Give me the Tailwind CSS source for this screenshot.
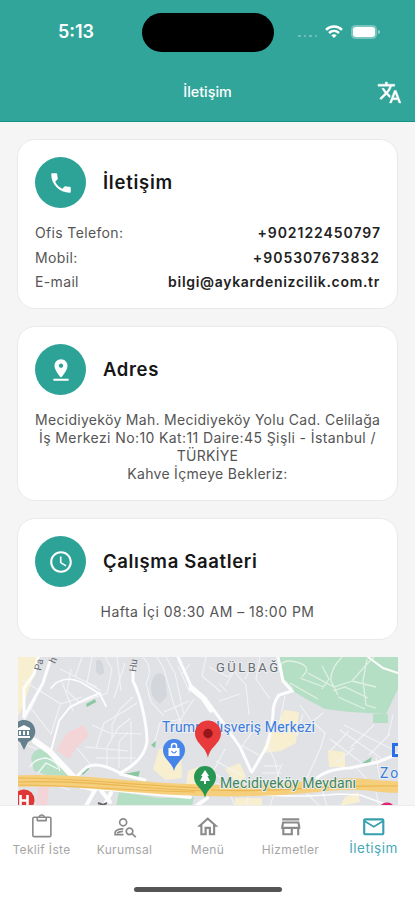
<!DOCTYPE html>
<html lang="tr">
<head>
<meta charset="utf-8">
<meta name="viewport" content="width=device-width, initial-scale=1">
<title>İletişim</title>
<script src="https://cdn.jsdelivr.net/npm/@tailwindcss/browser@4"></script>
</head>
<body class="h-[900px] w-[415px] overflow-hidden bg-[#f5f5f5] font-['Inter','Liberation_Sans',sans-serif] text-[#555]">
<div class="flex h-[900px] w-[415px] flex-col">
  <header class="h-[122px] shrink-0 border-b border-[#0f9489] bg-[#32a59b] text-white">
    <div class="grid h-[64px] grid-cols-[142px_132px_141px] items-center">
      <div class="pl-[10px] text-center text-[18px] font-semibold leading-[64px]">5:13</div>
      <div class="h-[39px] rounded-full bg-black"></div>
      <div class="flex items-center pl-[24px]">
        <div class="mt-[8px] flex gap-[3px]">
          <i class="size-[2.6px] rounded-full bg-white/35"></i><i class="size-[2.6px] rounded-full bg-white/35"></i><i class="size-[2.6px] rounded-full bg-white/35"></i><i class="size-[2.6px] rounded-full bg-white/35"></i>
        </div>
        <svg class="ml-[8px] h-[14px] w-[18px] shrink-0" viewBox="0 0 18 14" fill="none" stroke="#fff" stroke-width="2.500"><path d="M1 4.900C5.500.5 12.500.5 17 4.900M4 8C7 5.300 11 5.300 14 8"/><path d="M6.300 10.300Q9 8 11.700 10.300L9 13Z" fill="#fff" stroke="none"/></svg>
        <div class="ml-[8px] h-[14px] w-[26px] shrink-0 rounded-[4.500px] bg-white/35 p-[2px]"><div class="h-full rounded-[3px] bg-white"></div></div>
        <div class="ml-[1px] h-[4px] w-[1.500px] rounded-r bg-white/50"></div>
      </div>
    </div>
    <div class="grid h-[57px] grid-cols-[1fr_auto_1fr] items-center">
      <span></span>
      <h1 class="text-[14.300px] font-medium leading-none">İletişim</h1>
      <svg class="mr-[13px] size-[25px] justify-self-end" viewBox="0 0 24 24" fill="#fff" stroke="#fff" stroke-width=".4"><path d="M12.870 15.070l-2.540-2.510.03-.03c1.740-1.940 2.980-4.170 3.710-6.530H17V4h-7V2H8v2H1v1.990h11.170C11.500 7.920 10.440 9.750 9 11.350 8.070 10.320 7.300 9.190 6.690 8h-2c.73 1.630 1.730 3.170 2.980 4.560l-5.090 5.020L4 19l5-5 3.110 3.110.76-2.040zM18.500 10h-2L12 22h2l1.120-3h4.750L21 22h2l-4.500-12zm-2.620 7l1.620-4.330L19.120 17h-3.240z"/></svg>
    </div>
  </header>

  <main class="flex min-h-0 flex-1 flex-col gap-[17px] overflow-hidden px-[17px] pt-[17px]">
    <section class="h-[170px] shrink-0 rounded-[18px] border border-[#e9e9e9] bg-white px-[17px] pt-[17px]">
      <div class="flex items-center gap-[17px]">
        <div class="grid size-[51px] place-items-center rounded-full bg-[#2da398]"><svg class="size-[26px]" viewBox="0 0 24 24" fill="#fff"><path d="M6.620 10.790c1.440 2.830 3.760 5.140 6.590 6.590l2.200-2.200c.27-.27.67-.36 1.020-.24 1.120.37 2.330.57 3.570.57.55 0 1 .45 1 1V20c0 .55-.45 1-1 1-9.390 0-17-7.610-17-17 0-.55.45-1 1-1h3.500c.55 0 1 .45 1 1 0 1.250.2 2.450.57 3.570.11.35.03.74-.25 1.020l-2.200 2.200z"/></svg></div>
        <h2 class="text-[18.500px] font-semibold tracking-[0.750px] text-[#161616]">İletişim</h2>
      </div>
      <dl class="mt-[13px] text-[14px] leading-[24.500px]">
        <div class="flex justify-between"><dt class="tracking-[0.350px]">Ofis Telefon:</dt><dd class="-mr-[1px] font-semibold tracking-[0.950px] text-[#222]">+902122450797</dd></div>
        <div class="flex justify-between"><dt class="tracking-[0.350px]">Mobil:</dt><dd class="font-semibold tracking-[0.980px] text-[#222]">+905307673832</dd></div>
        <div class="flex justify-between"><dt class="tracking-[0.350px]">E-mail</dt><dd class="font-semibold tracking-[0.690px] text-[#222]">bilgi@aykardenizcilik.com.tr</dd></div>
      </dl>
    </section>

    <section class="h-[175px] shrink-0 rounded-[18px] border border-[#e9e9e9] bg-white px-[17px] pt-[17px]">
      <div class="flex items-center gap-[17px]">
        <div class="grid size-[51px] place-items-center rounded-full bg-[#2da398]"><svg class="size-[26px]" viewBox="0 0 24 24" fill="#fff"><path d="M18 8c0-3.310-2.690-6-6-6S6 4.690 6 8c0 4.500 6 11 6 11s6-6.500 6-11zm-8 0c0-1.100.9-2 2-2s2 .9 2 2-.89 2-2 2c-1.100 0-2-.9-2-2zM5 20v2h14v-2H5z"/></svg></div>
        <h2 class="text-[18.500px] font-semibold tracking-[0.650px] text-[#161616]">Adres</h2>
      </div>
      <p class="mt-[16px] whitespace-nowrap text-center text-[14px] leading-[18px] tracking-[0.300px]">Mecidiyeköy Mah. Mecidiyeköy Yolu Cad. Celilağa<br><span class="tracking-[0.400px]">İş Merkezi No:10 Kat:11 Daire:45 Şişli - İstanbul /</span><br>TÜRKİYE<br>Kahve İçmeye Bekleriz:</p>
    </section>

    <section class="h-[122px] shrink-0 rounded-[18px] border border-[#e9e9e9] bg-white px-[17px] pt-[17px]">
      <div class="flex items-center gap-[17px]">
        <div class="grid size-[51px] place-items-center rounded-full bg-[#2da398]"><svg class="size-[26px]" viewBox="0 0 24 24" fill="#fff"><path d="M11.990 2C6.470 2 2 6.480 2 12s4.470 10 9.990 10C17.520 22 22 17.520 22 12S17.520 2 11.990 2zM12 20c-4.420 0-8-3.580-8-8s3.580-8 8-8 8 3.580 8 8-3.580 8-8 8zm.5-13H11v6l5.250 3.150.75-1.230-4.500-2.670z"/></svg></div>
        <h2 class="text-[18.500px] font-semibold tracking-[0.650px] text-[#161616]">Çalışma Saatleri</h2>
      </div>
      <p class="mt-[16px] text-center text-[14px] leading-[18px] tracking-[0.470px]">Hafta İçi 08:30 AM – 18:00 PM</p>
    </section>

    <svg class="ml-[1px] h-[149px] w-[380px] shrink-0" viewBox="18 656 380 149" font-family="Roboto, sans-serif">
      <rect x="18" y="656" width="380" height="149" fill="#e0e2e6"/>
      <g fill="#f7efcf">
        <path d="M18 656H40L34 675 20 712 18 715Z"/>
        <path d="M159 748L181 744 182 777 165 779 153 768Z"/>
        <path d="M284 709L299 711 296 742 281 750 262 752 270 729 277 729Z"/>
        <path d="M328 749L345 751 345 766 329 766Z"/>
        <path d="M188 770L198 766 197 786 186 783ZM225 768L240 762 246 776 236 782ZM235 797H262V805H235ZM345 796L358 791 360 801 340 805Z"/>
      </g>
      <path d="M56 749L67 732 83 724 89 735 78 745 69 758Z" fill="#f4d5d7"/>
      <path d="M38 786H49L47 805H36Z" fill="#f4d5d7"/>
      <g fill="#b5dfc4">
        <path d="M31 757Q34 747 43 748L53 755 70 775 47 774 34 770Z"/>
        <path d="M373 713H388V722H373Z"/>
        <path d="M119 791L160 797 194 796 192 805H116Z"/>
      </g>
      <g fill="#8bc7a0"><path d="M86 703L95 698 96 701 87 706ZM81 772L88 765 89 768 83 774ZM123 773L140 770 138 777ZM151 744L156 740 155 747ZM362 762L372 756 370 762Z"/></g>
      <g fill="#d3d7dc"><path d="M153 677Q159 668 165 676L167 695 160 703Q150 696 151 685ZM96 660Q103 655 104 672Q99 677 96 670Z"/></g>
      <!-- minor streets -->
      <g fill="none" stroke="#f2f3f5" stroke-width="1.100" stroke-linejoin="round">
        <path d="M22 679L40 690 61 703 82 696M30 706L51 733 60 704M36 698L24 720M62 681L73 710M71 668L67 690 80 702 107 692 112 668 105 656M82 656L75 676M92 656L87 682 101 690M60 668L82 679 97 686"/>
        <path d="M112 738V724L120 708 133 696M96 747L104 722 123 711 137 702M107 765V746L118 727 131 717M119 767V741L128 731M92 724L110 732 142 733M85 746L128 750M96 757H136M77 747L90 763M131 720V762"/>
        <path d="M117 656L121 690M125 662L114 697M143 656Q154 668 146 682L151 701 164 715M157 656L164 668 173 701 181 722M166 656L175 672 184 714M178 665L190 692M194 698L176 725M164 711L189 700M155 740L160 722 182 718"/>
        <path d="M190 663L182 673M206 656L202 675 221 691M209 666L228 676 236 666M226 684L234 670 246 684 249 714M254 661L245 678M219 700L240 693M219 682L227 691M260 656L256 678 270 698"/>
        <path d="M253 730L242 745 259 754M216 760L241 774M225 748L213 771 239 791M205 778L236 789M268 745L275 760 279 778M285 695L279 724M300 704L312 721 323 712M303 713L297 735M313 721L325 732 321 746 307 777M282 763L273 785M262 772H281M264 765H280"/>
        <path d="M340 729L381 757M330 738L362 762M344 724L392 748M331 749L349 730M350 747L374 724M369 754L390 733M337 761L354 747M356 766L370 782M376 756L380 778M393 714L388 735"/>
        <path d="M53 784L70 789M20 742L37 748M228 788L235 805M250 787L246 805M275 790L270 805M307 793L320 805M322 789L327 805M375 786L379 805M174 787L172 793M193 787L206 795"/>
      </g>
      <path d="M278 656H398V688L386 713 350 711 325 708 308 699 293 690 282 679Z" fill="#b5dfc4"/>
      <g fill="none" stroke="#e0f0e5" stroke-width="1.300"><path d="M293 688L283 678 281 664Q284 658 296 661Q309 664 306 671L302 676M300 677L324 686M308 672L334 686 352 680 366 664 374 656M322 665L329 678 322 688M342 656Q330 668 331 680L338 694M333 690L345 686 368 697M338 696L365 708M367 658L363 680 366 704 376 707M352 680L376 686M290 682L318 698"/></g>
      <g fill="none" stroke="#f5f7f8" stroke-width="1.300"><path d="M30 766Q34 758 46 757Q58 760 60 770M38 772L46 762 58 768"/></g>
      <!-- main streets -->
      <g fill="none" stroke="#fdfdfe" stroke-width="3" stroke-linecap="round">
        <path d="M38 656L34 673 24 687V716M50 660L43 682 24 716"/>
        <path d="M35 740L49 750 82 785" stroke-width="6"/>
        <path d="M18 724L45 747M51 750L59 720 70 706 86 698 100 692" stroke-width="2"/>
        <path d="M133 664V680Q139 692 143 710T147 741Q144 760 120 772Q98 760 87 766L78 774M120 773L145 779M178 656L191 685 206 698M207 700L221 719 240 746 251 770"/>
        <path d="M191 687L203 697 211 709" stroke-width="5"/>
        <path d="M278 656L283 680 292 690 279 694Q273 702 273 712T267 745L252 771M317 777Q327 768 350 767L378 761 398 753"/>
        <path d="M51 687L56 682Q69 674 84 683L100 693 106 705" stroke-width="1.700"/>
        <path d="M80 785L95 789 86 805M99 787L110 801M98 787L190 796M207 797L196 805M111 792L104 805" stroke-width="4"/>
        <path d="M368 656L383 667 398 672" stroke-width="2"/>
        <path d="M259 793Q290 797 340 793L360 794 385 803" stroke-width="1.500"/>
      </g>
      <path d="M18 780C70 778 117 785 171 788S273 790 320 785 370 786 398 786" fill="none" stroke="#f5cf7b" stroke-width="11.500"/>
      <path d="M18 777C80 777 140 785 205 787M18 781C90 779 141 788 207 790M18 784C70 784 130 790 195 791M211 789C280 792 310 784 398 785" fill="none" stroke="#ebb752" stroke-width="1.200"/>
      <g fill="#666b71" font-size="10">
        <text transform="translate(41 670) rotate(-78)">Pa</text><text transform="translate(55 663) rotate(-65)">h</text><text transform="translate(136 671) rotate(-83)">Hu</text>
        <text x="216" y="671" font-size="13" textLength="62" stroke="#eceef0" stroke-width="2" paint-order="stroke">GÜLBAĞ</text>
      </g>
      <g font-size="14" stroke="#eceef1" stroke-width="2" paint-order="stroke">
        <text x="162" y="731" fill="#397bdd" textLength="153">Trump Alışveriş Merkezi</text>
        <text x="220" y="787" fill="#40865a" textLength="136">Mecidiyeköy Meydanı</text>
        <text x="380" y="777" fill="#397bdd" textLength="25">Zor</text>
      </g>
      <g>
        <path d="M24 749L20 741C10 736 12 719 24 719S40 736 28 741Z" fill="#64808c"/>
        <path d="M18 727L24 724 30 727V729H18ZM19 730H21V734H19ZM23 730H25V734H23ZM27 730H29V734H27ZM18 735H30V737H18Z" fill="#fff"/>
        <path d="M174 770C172 761 163 758 163 749A11 11 0 0 1 185 749C185 758 176 761 174 770Z" fill="#4784e9"/>
        <path d="M168.500 747H179.500V755H168.500Z" fill="#fff"/><path d="M171.500 747V745A2.500 2.500 0 0 1 176.500 745V747" fill="none" stroke="#fff" stroke-width="1.500"/><path d="M171.500 750Q174 754 176.500 750" fill="none" stroke="#4784e9" stroke-width="1.200"/>
        <path d="M205 797C203 787 194 785 194 776A11 11 0 0 1 216 776C216 785 207 787 205 797Z" fill="#279653"/>
        <path d="M205 769L209 775H207.500L210 780H206V783H204V780H200L202.500 775H201Z" fill="#fff"/>
        <path d="M208 757C206 745 195 743 195 732A13 12.500 0 0 1 221 732C221 743 210 745 208 757Z" fill="#e93a3b"/>
        <circle cx="208" cy="732.500" r="4.700" fill="#951719"/>
        <circle cx="24" cy="799" r="10.500" fill="#df3735"/><path d="M20.500 794V805M27.500 794V805M20.500 799.500H27.500" stroke="#fff" stroke-width="2.600" fill="none"/>
        <path d="M398 742H392V756H398V753H395V745H398Z" fill="#286ee8"/>
        <circle cx="387" cy="810" r="8.500" fill="#e72371"/>
        <path d="M98 802L103 804 107 802" fill="none" stroke="#666" stroke-width="2"/>
      </g>
    </svg>
  </main>

  <nav class="h-[95px] shrink-0 border-t border-[#ededed] bg-white">
    <div class="grid h-[80px] grid-cols-5 pt-[8px] text-[12px] leading-[18px] tracking-[0.350px] text-[#a6a6a6]">
      <div class="flex flex-col items-center"><svg class="size-[25.500px]" viewBox="0 0 24 24" fill="none" stroke="#8a8a8a" stroke-width="1.500" stroke-linejoin="round"><rect x="3.600" y="3" width="17" height="18.300" rx="1.300"/><path d="M7.800 3V6.200H16.200V3M9.800 2.800Q10 .9 12 .9T14.200 2.800"/></svg><span class="mt-[1px]">Teklif İste</span></div>
      <div class="flex flex-col items-center"><svg class="size-[25.500px]" viewBox="0 0 24 24" fill="none" stroke="#8a8a8a" stroke-width="1.600"><circle cx="10.500" cy="7.800" r="3.300"/><path d="M10.800 14.100C7 13.700 2.900 15.500 2.900 17.500V19.400H10.800M4.800 17.900Q7 16.300 10.300 16.300"/><circle cx="16.500" cy="16.300" r="3.100"/><path d="M18.800 18.500L22.400 21.700"/></svg><span class="mt-[1px]">Kurumsal</span></div>
      <div class="flex flex-col items-center"><svg class="size-[25.500px]" viewBox="0 0 24 24" fill="#8a8a8a"><path d="M12 5.690l5 4.500V18h-2v-6H9v6H7v-7.810l5-4.500M12 3L2 12h3v8h6v-6h2v6h6v-8h3L12 3z"/></svg><span class="mt-[1px]">Menü</span></div>
      <div class="flex flex-col items-center"><svg class="size-[25.500px]" viewBox="0 0 24 24" fill="#8a8a8a"><path d="M18.360 9l.6 3H5.040l.6-3h12.720M20 4H4v2h16V4zm0 3H4l-1 5v2h1v6h10v-6h4v6h2v-6h1v-2l-1-5zM6 18v-4h6v4H6z"/></svg><span class="mt-[1px]">Hizmetler</span></div>
      <div class="flex flex-col items-center text-[13.500px] tracking-[0.500px] text-[#46a9b7]"><svg class="size-[25.500px]" viewBox="0 0 24 24" fill="#379fae"><path d="M22 6c0-1.100-.9-2-2-2H4c-1.100 0-2 .9-2 2v12c0 1.100.9 2 2 2h16c1.100 0 2-.9 2-2V6zm-2 0l-8 5-8-5h16zm0 12H4V8l8 5 8-5v10z"/></svg><span class="-mt-[0.500px]">İletişim</span></div>
    </div>
    <div class="mx-auto mt-[1px] h-[5px] w-[148px] rounded-full bg-[#555]"></div>
  </nav>
</div>
</body>
</html>
